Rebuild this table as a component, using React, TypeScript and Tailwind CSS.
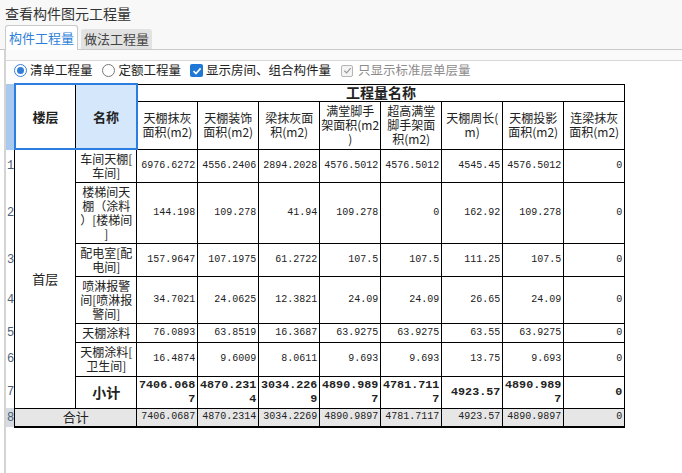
import React from "react";

const CJK = "font-['Noto_Sans_CJK_SC','Noto_Sans',sans-serif]";
const MONO = "font-['Liberation_Mono','Noto_Sans_CJK_SC',monospace]";

interface Row {
  name: string[];
  values: string[];
  h: string;
}

const rows: Row[] = [
  {
    name: ["车间天棚[", "车间]"],
    values: ["6976.6272", "4556.2406", "2894.2028", "4576.5012", "4576.5012", "4545.45", "4576.5012", "0"],
    h: "h-[33px]",
  },
  {
    name: ["楼梯间天", "棚（涂料", "）[楼梯间", "]"],
    values: ["144.198", "109.278", "41.94", "109.278", "0", "162.92", "109.278", "0"],
    h: "h-[61px]",
  },
  {
    name: ["配电室[配", "电间]"],
    values: ["157.9647", "107.1975", "61.2722", "107.5", "107.5", "111.25", "107.5", "0"],
    h: "h-[33px]",
  },
  {
    name: ["喷淋报警", "间[喷淋报", "警间]"],
    values: ["34.7021", "24.0625", "12.3821", "24.09", "24.09", "26.65", "24.09", "0"],
    h: "h-[47px]",
  },
  {
    name: ["天棚涂料"],
    values: ["76.0893", "63.8519", "16.3687", "63.9275", "63.9275", "63.55", "63.9275", "0"],
    h: "h-[19px]",
  },
  {
    name: ["天棚涂料[", "卫生间]"],
    values: ["16.4874", "9.6009", "8.0611", "9.693", "9.693", "13.75", "9.693", "0"],
    h: "h-[34px]",
  },
];

const subtotal = [
  ["7406.068", "7"],
  ["4870.231", "4"],
  ["3034.226", "9"],
  ["4890.989", "7"],
  ["4781.711", "7"],
  ["4923.57"],
  ["4890.989", "7"],
  ["0"],
];

const total = ["7406.0687", "4870.2314", "3034.2269", "4890.9897", "4781.7117", "4923.57", "4890.9897", "0"];

const headers: string[][] = [
  ["天棚抹灰", "面积(m2)"],
  ["天棚装饰", "面积(m2)"],
  ["梁抹灰面", "积(m2)"],
  ["满堂脚手", "架面积(m2", ")"],
  ["超高满堂", "脚手架面", "积(m2)"],
  ["天棚周长(", "m)"],
  ["天棚投影", "面积(m2)"],
  ["连梁抹灰", "面积(m2)"],
];

const cell = "border border-black p-0";

const Lines = ({ lines }: { lines: string[] }) => (
  <div className="whitespace-nowrap leading-[14px]">
    {lines.map((l, i) => (
      <div key={i}>{l}</div>
    ))}
  </div>
);

export default function App() {
  return (
    <div className={`w-[682px] h-[473px] overflow-hidden bg-white text-[#222] ${CJK}`}>
      {/* title + tabs */}
      <div className="bg-[#f8f8f8]">
        <div className="pl-[5px] pt-[3px] h-[26px] text-[14px] leading-[20px] text-[#333]">查看构件图元工程量</div>
        <div className="flex items-end h-[24px] border-b border-[#c9c9c9] pl-[5px]">
          <div className="h-[25px] -mb-px w-[73px] bg-white border border-b-0 border-[#c9c9c9] rounded-t-[3px] flex items-center justify-center text-[13px] text-[#2f7fd8]">
            构件工程量
          </div>
          <div className="ml-[3px] h-[20px] w-[71px] bg-[#e2e2e2] rounded-t-[3px] flex items-center justify-center text-[13px] text-[#444]">
            做法工程量
          </div>
        </div>
      </div>

      {/* tab panel */}
      <div className="ml-[4px] border-l-2 border-[#d4d4d4] h-[423px]">
        <div className="h-[10px] bg-[#fafafa]" />
        <div className="h-[23px] pb-[3px] border-t border-[#d8d8d8] flex items-center text-[12.5px] pl-[8px]">
          <span className="w-[13px] h-[13px] rounded-full border border-[#3a7fd5] bg-white flex items-center justify-center">
            <span className="w-[7px] h-[7px] rounded-full bg-[#2f7fd8]" />
          </span>
          <span className="ml-[3px]">清单工程量</span>
          <span className="ml-[9px] w-[13px] h-[13px] rounded-full border border-[#777] bg-white" />
          <span className="ml-[4px]">定额工程量</span>
          <span className="ml-[9px] w-[13px] h-[13px] rounded-[2px] bg-[#1f78d6] flex items-center justify-center">
            <svg width="10" height="10" viewBox="0 0 10 10">
              <path d="M1.5 5.2 L4 7.6 L8.6 2.4" fill="none" stroke="white" strokeWidth="1.6" />
            </svg>
          </span>
          <span className="ml-[3px]">显示房间、组合构件量</span>
          <span className="ml-[10px] w-[12px] h-[12px] rounded-[2px] border border-[#b5b5b5] bg-[#f4f4f4] flex items-center justify-center">
            <svg width="9" height="9" viewBox="0 0 10 10">
              <path d="M1.5 5.2 L4 7.6 L8.6 2.4" fill="none" stroke="#9a9a9a" strokeWidth="1.4" />
            </svg>
          </span>
          <span className="ml-[5px] text-[#8c8c8c]">只显示标准层单层量</span>
        </div>

        <table className="border-collapse table-fixed text-[12px] leading-[14px]">
          <colgroup>
            <col className="w-[8px]" />
            {Array.from({ length: 10 }).map((_, i) => (
              <col key={i} className="w-[61px]" />
            ))}
          </colgroup>
          <tbody>
            <tr className="h-[17px]">
              <td rowSpan={2} className="p-0 bg-[#a9c9ef] border-y border-[#a9c9ef]" />
              <td rowSpan={2} className="border-2 border-[#2b7de0] border-r border-r-black bg-white text-center font-bold text-[13px]">
                楼层
              </td>
              <td rowSpan={2} className="border-2 border-[#2b7de0] border-l border-l-black bg-[#d5e8fb] text-center font-bold text-[13px]">
                名称
              </td>
              <td colSpan={8} className={`${cell} text-center font-bold text-[14px] leading-[15px]`}>
                工程量名称
              </td>
            </tr>
            <tr className="h-[48px]">
              {headers.map((h, i) => (
                <td key={i} className={`${cell} text-center align-middle`}>
                  <Lines lines={h} />
                </td>
              ))}
            </tr>
            {rows.map((r, ri) => (
              <tr key={ri} className={r.h}>
                <td className={`p-0 text-[12px] text-[#4b5d75] ${MONO}`}>
                  <span className="pl-[1px]">{ri + 1}</span>
                </td>
                {ri === 0 && (
                  <td rowSpan={7} className={`${cell} text-center text-[13px]`}>
                    首层
                  </td>
                )}
                <td className={`${cell} text-center text-[12px]`}>
                  <Lines lines={r.name} />
                </td>
                {r.values.map((v, vi) => (
                  <td key={vi} className={`${cell} text-right pr-[2px] text-[10px] ${MONO}`}>
                    {v}
                  </td>
                ))}
              </tr>
            ))}
            <tr className="h-[32px]">
              <td className={`p-0 text-[12px] text-[#4b5d75] ${MONO}`}>
                <span className="pl-[1px]">7</span>
              </td>
              <td className={`${cell} text-center font-bold text-[14px]`}>小计</td>
              {subtotal.map((v, vi) => (
                <td key={vi} className={`${cell} text-right pr-[2px] font-bold text-[11.7px] leading-[14px] ${MONO}`}>
                  {v.map((l, li) => (
                    <div key={li}>{l}</div>
                  ))}
                </td>
              ))}
            </tr>
            <tr className="h-[19px] bg-[#e6e6e6]">
              <td className={`p-0 text-[12px] text-[#4b5d75] bg-[#d6dbe2] ${MONO}`}>
                <span className="pl-[1px]">8</span>
              </td>
              <td colSpan={2} className={`${cell} border-b-2 text-center text-[13px]`}>
                合计
              </td>
              {total.map((v, vi) => (
                <td key={vi} className={`${cell} border-b-2 text-right pr-[2px] text-[10px] ${MONO}`}>
                  {v}
                </td>
              ))}
            </tr>
          </tbody>
        </table>
      </div>
    </div>
  );
}
